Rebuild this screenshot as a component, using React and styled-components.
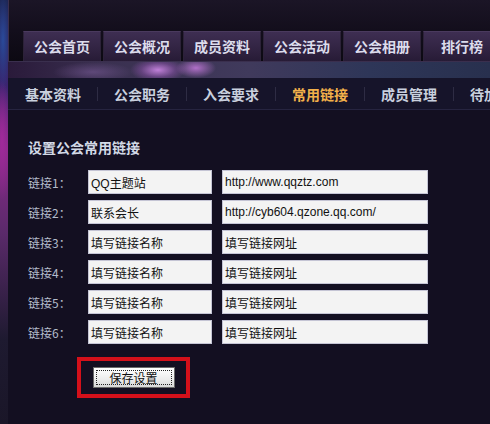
import React from "react";
import styled, { createGlobalStyle } from "styled-components";

const GlobalStyle = createGlobalStyle`
  html, body {
    margin: 0;
    padding: 0;
    background: #130f20;
  }
  body {
    width: 490px;
    height: 424px;
    overflow: hidden;
    font-family: "Noto Sans CJK SC", "Liberation Sans", sans-serif;
    background:
      radial-gradient(ellipse 10px 60px at 2px 140px, #a02a9a 0%, transparent 100%),
      radial-gradient(ellipse 8px 50px at 3px 40px, #2a4a9a 0%, transparent 100%),
      linear-gradient(180deg, #1c2450 0%, #3b2470 20%, #8a2a8a 35%, #5a2a6a 55%, #1e1a30 80%, #1a1628 100%);
  }
`;

const tabs = ["公会首页", "公会概况", "成员资料", "公会活动", "公会相册", "排行榜"];
const subs = ["基本资料", "公会职务", "入会要求", "常用链接", "成员管理", "待加入成员"];
const links = [
  ["QQ主题站", "http://www.qqztz.com"],
  ["联系会长", "http://cyb604.qzone.qq.com/"],
  ["填写链接名称", "填写链接网址"],
  ["填写链接名称", "填写链接网址"],
  ["填写链接名称", "填写链接网址"],
  ["填写链接名称", "填写链接网址"],
];

export default function App() {
  return (
    <Page>
      <GlobalStyle />
      <Header>
        <TabRow>
          {tabs.map((t) => (
            <Tab key={t}>{t}</Tab>
          ))}
        </TabRow>
      </Header>
      <Glow />
      <Panel>
        <SubNav>
          {subs.map((s, i) => (
            <React.Fragment key={s}>
              {i > 0 && <Sep />}
              <SubItem $active={s === "常用链接"}>{s}</SubItem>
            </React.Fragment>
          ))}
        </SubNav>
        <Content>
          <Title>设置公会常用链接</Title>
          <Rows>
            {links.map(([name, url], i) => (
              <Row key={i}>
                <Label>链接{i + 1}：</Label>
                <Field $w={124} defaultValue={name} />
                <Field $w={206} defaultValue={url} />
              </Row>
            ))}
          </Rows>
          <Highlight>
            <SaveButton>保存设置</SaveButton>
          </Highlight>
        </Content>
      </Panel>
    </Page>
  );
}

const Page = styled.div`
  display: flex;
  flex-direction: column;
  margin-left: 8px;
  height: 424px;
`;

const Header = styled.div`
  height: 61px;
  border-left: 1px solid #3a2f4e;
  border-bottom: 1px solid #3a2f4e;
  background: linear-gradient(180deg, #1b1526 0%, #130e1c 50%, #0c0912 100%);
  display: flex;
  align-items: flex-end;
  padding-left: 14px;
`;

const TabRow = styled.div`
  display: flex;
  gap: 2px;
`;

const Tab = styled.div`
  width: 78px;
  height: 30px;
  box-sizing: border-box;
  border: 1px solid #2c2238;
  border-bottom: none;
  border-top-color: #4a3a5e;
  background: linear-gradient(180deg, #3e2e52 0%, #322443 55%, #271b36 100%);
  color: #dcdcec;
  font-size: 14px;
  font-weight: 700;
  line-height: 29px;
  text-align: center;
  white-space: nowrap;
  overflow: hidden;
`;

const Glow = styled.div`
  height: 16px;
  background:
    radial-gradient(ellipse 28px 12px at 150px 8px, #c080d8 0%, rgba(160,90,190,0.4) 60%, transparent 100%),
    radial-gradient(ellipse 20px 10px at 188px 6px, #b070c8 0%, transparent 100%),
    radial-gradient(ellipse 40px 10px at 85px 10px, rgba(120,90,150,0.6) 0%, transparent 100%),
    linear-gradient(90deg, #2a1a3a 0%, #3a3050 20%, #403a5c 50%, #2e3658 75%, #28304e 100%);
`;

const Panel = styled.div`
  flex: 1;
  display: flex;
  flex-direction: column;
  background: #130f21;
`;

const SubNav = styled.div`
  height: 31px;
  display: flex;
  align-items: center;
  padding-left: 17px;
  background: #16142a;
  border-bottom: 1px solid #262440;
  white-space: nowrap;
  overflow: hidden;
`;

const SubItem = styled.div`
  padding: 0 16px 0 0;
  font-size: 14px;
  font-weight: 700;
  color: ${(p) => (p.$active ? "#f2b04a" : "#c9d0de")};
  flex-shrink: 0;
`;

const Sep = styled.div`
  width: 1px;
  height: 14px;
  background: #2e2c44;
  margin-right: 16px;
  flex-shrink: 0;
`;

const Content = styled.div`
  display: flex;
  flex-direction: column;
  align-items: flex-start;
  padding: 28px 0 0 20px;
`;

const Title = styled.div`
  font-size: 14px;
  font-weight: 700;
  color: #d2d9e6;
  line-height: 18px;
  margin-bottom: 14px;
`;

const Rows = styled.div`
  display: flex;
  flex-direction: column;
  gap: 6px;
`;

const Row = styled.div`
  display: flex;
  align-items: center;
`;

const Label = styled.div`
  width: 60px;
  font-size: 12px;
  color: #b4bccc;
`;

const Field = styled.input`
  width: ${(p) => p.$w}px;
  height: 24px;
  box-sizing: border-box;
  margin: 0 10px 0 0;
  padding: 0 2px;
  border: 1px solid #c4c4d4;
  background: #f3f3f3;
  font-family: "Liberation Sans", "Noto Sans CJK SC", sans-serif;
  font-size: 12px;
  color: #111;
  outline: none;
`;

const Highlight = styled.div`
  margin: 13px 0 0 49px;
  width: 113px;
  height: 41px;
  box-sizing: border-box;
  border: 4px solid #d4101a;
  display: flex;
  align-items: center;
  justify-content: center;
`;

const SaveButton = styled.button`
  width: 82px;
  height: 21px;
  padding: 0;
  border: 1px solid #6a6a6a;
  outline: 1px dotted #222;
  outline-offset: -4px;
  background: linear-gradient(180deg, #ffffff 0%, #ececec 60%, #d8d8d8 100%);
  font-family: "Noto Sans CJK SC", sans-serif;
  font-size: 12px;
  color: #111;
`;
